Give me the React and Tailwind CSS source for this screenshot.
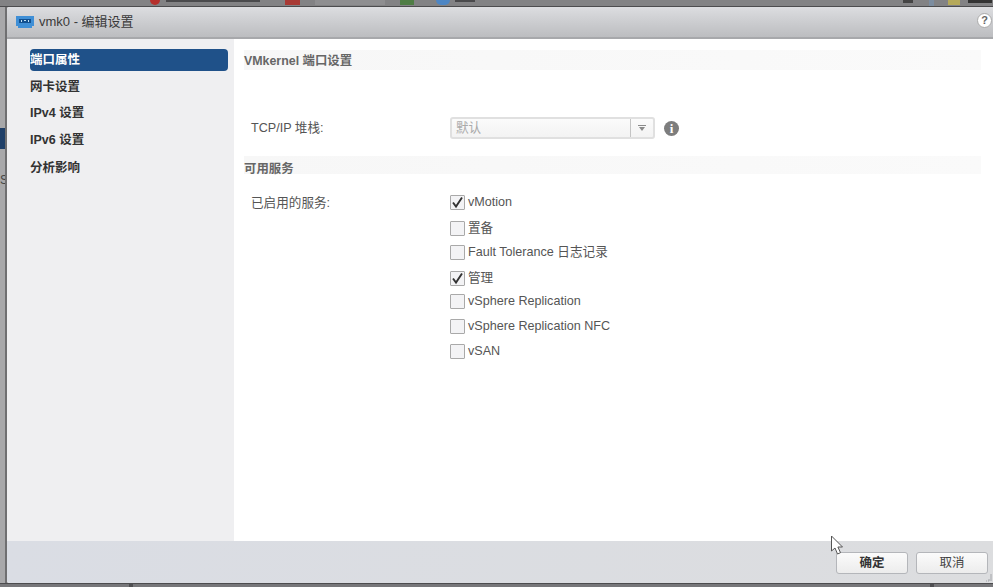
const FONT = "font-['Liberation_Sans','Noto_Sans_CJK_SC',sans-serif]";

const navItems = [
  { label: "端口属性", active: true, mt: "" },
  { label: "网卡设置", mt: "mt-[5px]" },
  { label: "IPv4 设置", mt: "mt-[4px]" },
  { label: "IPv6 设置", mt: "mt-[5px]" },
  { label: "分析影响", mt: "mt-[6px]" },
];

const services = [
  { label: "vMotion", checked: true, mt: "mt-[3px]" },
  { label: "置备", mt: "mt-[6px]" },
  { label: "Fault Tolerance 日志记录", mt: "mt-[4px]" },
  { label: "管理", checked: true, mt: "mt-[6px]" },
  { label: "vSphere Replication", mt: "mt-[3px]" },
  { label: "vSphere Replication NFC", mt: "mt-[5px]" },
  { label: "vSAN", mt: "mt-[5px]" },
];

function NetIcon() {
  return (
    <svg width="18" height="14" viewBox="0 0 18 14">
      <path d="M0 1h18v10h-2v2H2v-2H0z" fill="#3f8fd6" />
      <rect x="3" y="4" width="12" height="4" fill="#12508f" />
      <path d="M5 5h1v2H5zM8 5h2v1H8zM12 5h1v2h-1z" fill="#bfe0f5" />
    </svg>
  );
}

function Checkbox({ checked }) {
  return (
    <span className="flex h-[15px] w-[15px] shrink-0 items-center justify-center rounded-[1px] border border-[#a9a9a9] bg-[#f3f3f5]">
      {checked && (
        <svg width="13" height="13" viewBox="0 0 13 13">
          <path d="M2 6.5l3 4 6-9" fill="none" stroke="#333" strokeWidth="1.9" />
        </svg>
      )}
    </span>
  );
}

function Cursor() {
  return (
    <svg className="absolute left-[830px] top-[535px]" width="16" height="21" viewBox="0 0 16 21">
      <path d="M1.5 1v15l3.5-3 2.5 6 3-1.3-2.6-5.7h4.6z" fill="#fff" stroke="#555" strokeWidth="1" />
    </svg>
  );
}

function ResizeGrip() {
  return (
    <svg className="absolute bottom-[1px] right-0" width="8" height="8" viewBox="0 0 8 8">
      <path d="M1 7h1M3 7h1v-2M6 7v-7" fill="none" stroke="#a4a6aa" strokeWidth="1" />
    </svg>
  );
}

// toolbar of the app behind the dialog, only its bottom edge shows
function TopStrip() {
  return (
    <div className="flex h-[7px] shrink-0 items-start border-b border-[#4c4c4e] bg-[#828284]">
      <div className="ml-[150px] h-[5px] w-[10px] rounded-b-full bg-[#b5302c]" />
      <div className="ml-[6px] h-[2px] w-[94px] bg-[#4a4a4c]" />
      <div className="ml-[25px] h-[5px] w-[15px] bg-[#a83a35]" />
      <div className="ml-[15px] h-[5px] w-[70px] bg-[#8e8e90]" />
      <div className="ml-[15px] h-[5px] w-[14px] bg-[#4f7d45]" />
      <div className="ml-[22px] h-[5px] w-[14px] rounded-b-full bg-[#4d86c4]" />
      <div className="ml-[5px] h-[2px] w-[20px] bg-[#4a4a4c]" />
      <div className="ml-[428px] h-[3px] w-[10px] bg-[#444]" />
      <div className="ml-[16px] h-[6px] w-[5px] bg-[#7c8da0]" />
      <div className="ml-[14px] h-[5px] w-[12px] bg-[#b5a95a]" />
      <div className="ml-[8px] h-[3px] w-[24px] bg-[#333]" />
    </div>
  );
}

function LeftStrip() {
  return (
    <div className="flex w-[7px] shrink-0 flex-col overflow-hidden border-r-2 border-[#6f6f71] bg-[#a8a8aa] pt-[121px]">
      <div className="h-[21px] bg-[#1f3f68]" />
      <span className="mt-[24px] text-[12px] leading-[14px] text-[#444]">S</span>
    </div>
  );
}

function BottomStrip() {
  return (
    <div className="flex h-[4px] shrink-0 border-t border-[#4c4c4e] bg-[#77777a]">
      <div className="ml-[129px] w-[4px] bg-[#4f4f52]" />
      <div className="ml-[797px] w-[4px] bg-[#4f4f52]" />
    </div>
  );
}

export default function App() {
  return (
    <div className={`relative flex h-[587px] w-[993px] flex-col overflow-hidden bg-[#a8a8aa] ${FONT}`}>
      <TopStrip />

      <div className="flex min-h-0 flex-1">
        <LeftStrip />

        <div className="flex min-w-0 flex-1 flex-col overflow-hidden rounded-l-[3px] bg-white">
          {/* title bar */}
          <div className="flex h-[32px] shrink-0 items-center border-b-2 border-[#a7a8ab] bg-gradient-to-b from-[#dcdde0] to-[#bcbdc0] pl-[9px] pr-[1px]">
            <NetIcon />
            <span className="ml-[5px] text-[13px] text-[#3a3a3a]">vmk0 - 编辑设置</span>
            <span className="-mt-[4px] ml-auto flex h-[15px] w-[15px] items-center justify-center rounded-full border border-[#aaa] bg-white text-[11px] font-bold leading-none text-[#666]">
              ?
            </span>
          </div>

          <div className="flex min-h-0 flex-1">
            {/* left nav */}
            <nav className="w-[227px] shrink-0 bg-[#efeff1] pl-[23px] pr-[6px] pt-[10px]">
              {navItems.map((item) => (
                <div
                  key={item.label}
                  className={`${item.mt} h-[22px] text-[12.5px] font-bold leading-[22px] ${
                    item.active ? "rounded-[4px] bg-[#1f5189] text-white" : "text-[#333]"
                  }`}
                >
                  {item.label}
                </div>
              ))}
            </nav>

            {/* main pane */}
            <main className="flex-1 pl-[10px] pt-[11px] text-[12.6px] text-[#555]">
              <div className="mr-[12px] h-[20px] bg-gradient-to-r from-[#f7f7f7] to-[#fafafa] text-[12.4px] font-bold leading-[23px] text-[#666]">
                VMkernel 端口设置
              </div>

              <div className="mt-[46px] flex h-[24px] items-center pl-[7px]">
                <span className="w-[199px]">TCP/IP 堆栈:</span>
                <div className="flex h-[22px] w-[205px] items-center rounded-[3px] border-2 border-[#e0e0e0] bg-gradient-to-b from-[#fbfbfb] to-[#f3f3f3] text-[#aaa]">
                  <span className="flex-1 pl-[4px]">默认</span>
                  <span className="flex h-full w-[23px] items-center justify-center border-l border-[#c4c4c4]">
                    <svg width="8" height="6" viewBox="0 0 8 6">
                      <path d="M0 0h8v1H0zM1 2h6L4 6z" fill="#8a8a8a" />
                    </svg>
                  </span>
                </div>
                <span className="ml-[9px] flex h-[15px] w-[15px] items-center justify-center rounded-full bg-[#7d7d7d] font-['Liberation_Serif',serif] text-[13px] font-bold leading-none text-white">
                  i
                </span>
              </div>

              <div className="mr-[12px] mt-[16px] h-[18px] bg-gradient-to-r from-[#f7f7f7] to-[#fafafa] text-[12.4px] font-bold leading-[26px] text-[#666]">
                可用服务
              </div>

              <div className="mt-[15px] flex pl-[7px]">
                <span className="w-[199px] leading-[28px]">已启用的服务:</span>
                <div>
                  {services.map((s) => (
                    <div key={s.label} className={`${s.mt} flex h-[20px] items-center gap-[3px]`}>
                      <Checkbox checked={s.checked} />
                      <span>{s.label}</span>
                    </div>
                  ))}
                </div>
              </div>
            </main>
          </div>

          {/* footer */}
          <div className="relative flex h-[42px] shrink-0 items-center justify-end gap-[8px] bg-gradient-to-r from-[#dadde4] to-[#dcdddf] pr-[5px] pt-[2px]">
            <button className="h-[22px] w-[72px] rounded-[3px] border border-[#b4b6ba] bg-gradient-to-b from-[#fbfbfb] to-[#ececec] text-[12.5px] font-bold text-[#333]">
              确定
            </button>
            <button className="h-[22px] w-[72px] rounded-[3px] border border-[#b4b6ba] bg-gradient-to-b from-[#fbfbfb] to-[#ececec] text-[12.5px] text-[#444]">
              取消
            </button>
            <ResizeGrip />
          </div>
        </div>
      </div>

      <BottomStrip />
      <Cursor />
    </div>
  );
}
